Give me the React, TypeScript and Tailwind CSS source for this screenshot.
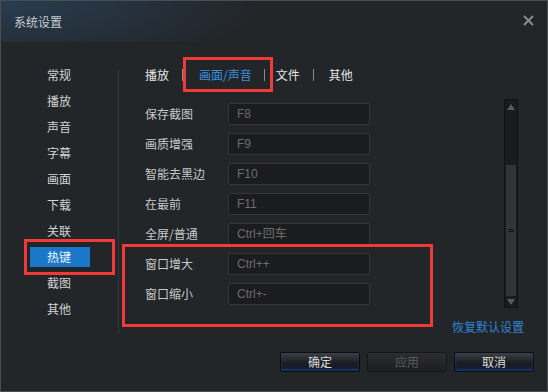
const navItems = ["常规", "播放", "声音", "字幕", "画面", "下载", "关联", "热键", "截图", "其他"];

const hotkeys = [
  ["保存截图", "F8"],
  ["画质增强", "F9"],
  ["智能去黑边", "F10"],
  ["在最前", "F11"],
  ["全屏/普通", "Ctrl+回车"],
  ["窗口增大", "Ctrl++"],
  ["窗口缩小", "Ctrl+-"],
];

const font = "font-['Microsoft_YaHei','Noto_Sans_CJK_SC',sans-serif]";

function Button({ label, disabled }: { label: string; disabled?: boolean }) {
  return (
    <button
      className={
        disabled
          ? "flex h-[20px] w-[80px] items-center justify-center rounded-[2px] border border-[#161616] bg-[linear-gradient(#2c2d30,#1d1e20)] text-[12px] text-[#5a5a5a]"
          : "flex h-[20px] w-[80px] items-center justify-center rounded-[2px] border border-[#0c0d10] bg-[linear-gradient(#3c3f45,#1a1d22_55%,#0f1a2e)] text-[12px] text-[#dcdcdc] shadow-[inset_0_-2px_3px_rgba(40,90,170,0.45)]"
      }
    >
      {label}
    </button>
  );
}

function Scrollbar() {
  return (
    <div className="mt-[-4px] flex h-[209px] w-[14px] flex-col items-center border border-[#121212] bg-[#1b1b1c]">
      <svg width="8" height="6" viewBox="0 0 8 6" className="mt-[4px]">
        <path d="M4 0 L8 6 L0 6 Z" fill="#5a5a5a" />
      </svg>
      <div className="mt-[55px] flex h-[131px] w-[10px] items-center justify-center bg-[#333436]">
        <div className="flex flex-col gap-[1px]">
          <div className="h-[1px] w-[6px] bg-[#111]" />
          <div className="h-[1px] w-[6px] bg-[#111]" />
        </div>
      </div>
      <svg width="8" height="6" viewBox="0 0 8 6" className="mt-[3px]">
        <path d="M0 0 L8 0 L4 6 Z" fill="#5a5a5a" />
      </svg>
    </div>
  );
}

export default function App() {
  return (
    <div
      className={`relative flex h-[392px] w-[548px] flex-col overflow-hidden border border-[#4a4c4f] bg-[#222528] bg-[repeating-conic-gradient(#25292c_0_25%,#1f2225_0_50%)] bg-[length:2px_2px] ${font}`}
    >
      <div className="flex h-[41px] shrink-0 items-center justify-between bg-[radial-gradient(ellipse_260px_70px_at_0_0,rgba(45,80,115,0.55),transparent)] pl-[13px] pr-[13px]">
        <span className="text-[12px] text-[#c9cdd1]">系统设置</span>
        <svg width="11" height="11" viewBox="0 0 11 11" className="mb-[2px]">
          <path d="M1 1 L10 10 M10 1 L1 10" stroke="#8a8a8a" strokeWidth="2" />
        </svg>
      </div>

      <div className="flex h-[296px] shrink-0">
        <nav className="flex w-[117px] flex-col gap-[6px] pl-[29px] pt-[23px]">
          {navItems.map((item) => (
            <div
              key={item}
              className={
                item === "热键"
                  ? "flex h-[20px] w-[60px] items-center bg-[#1b78c9] pl-[17px] text-[12px] text-[#eef4fb]"
                  : "flex h-[20px] items-center pl-[17px] text-[12px] text-[#d2d2d2]"
              }
            >
              {item}
            </div>
          ))}
        </nav>

        <div className="mt-[28px] h-[264px] w-px bg-[#34373a]" />

        <div className="flex flex-1 flex-col pl-[26px] pt-[23px]">
          <div className="flex h-[20px] items-center text-[12px]">
            <span className="text-[#e6e6e6]">播放</span>
            <span className="ml-[13px] h-[12px] w-px bg-[#8a8a8a]" />
            <span className="ml-[16px] text-[#3b8fe2]">画面/声音</span>
            <span className="ml-[12px] h-[12px] w-px bg-[#8a8a8a]" />
            <span className="ml-[11px] text-[#e6e6e6]">文件</span>
            <span className="ml-[13px] h-[12px] w-px bg-[#8a8a8a]" />
            <span className="ml-[15px] text-[#e6e6e6]">其他</span>
          </div>

          <div className="mt-[18px] flex">
            <div className="flex flex-col gap-[8px]">
              {hotkeys.map(([label, key]) => (
                <div key={label} className="flex h-[22px] items-center">
                  <span className="w-[83px] text-[12px] text-[#c8c8c8]">{label}</span>
                  <div className="flex h-[22px] w-[142px] items-center rounded-[2px] border border-[#333538] bg-[#1b1c1e] pl-[8px] font-['Liberation_Sans','Noto_Sans_CJK_SC',sans-serif] text-[12px] text-[#6c6c6c]">
                    {key}
                  </div>
                </div>
              ))}
            </div>
            <div className="ml-[134px]">
              <Scrollbar />
            </div>
          </div>

          <div className="mr-[23px] mt-[10px] self-end text-[12px] text-[#2f84d6]">恢复默认设置</div>
        </div>
      </div>

      <div className="flex justify-end gap-[7px] pr-[13px] pt-[14px]">
        <Button label="确定" />
        <Button label="应用" disabled />
        <Button label="取消" />
      </div>

      <div className="absolute left-[23px] top-[238px] h-[36px] w-[91px] border-[3px] border-[#f03a3a]" />
      <div className="absolute left-[182px] top-[56px] h-[35px] w-[90px] border-[3px] border-[#f03a3a]" />
      <div className="absolute left-[121px] top-[243px] h-[83px] w-[311px] border-[3px] border-[#f03a3a]" />
    </div>
  );
}
